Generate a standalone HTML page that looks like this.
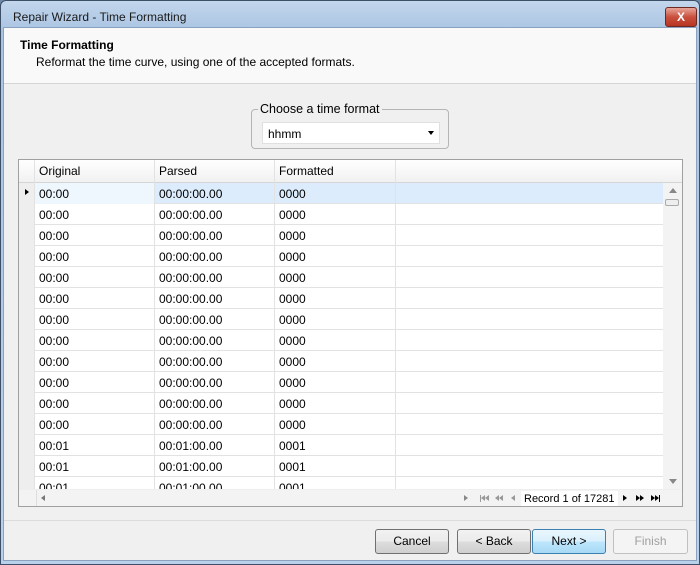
<!DOCTYPE html>
<html><head><style>
*{box-sizing:border-box;margin:0;padding:0}
body{width:700px;height:565px;overflow:hidden;font-family:"Liberation Sans",sans-serif;font-size:12px;color:#000;background:#6f8aa8}
.win{position:absolute;left:0;top:0;width:700px;height:565px;border:1px solid #3c4f66;border-radius:6px 6px 0 0;background:linear-gradient(#c2d6ec,#aac4e2 30px,#b9d1ea);}
.title{position:absolute;left:12px;top:9px;font-size:12px;color:#1a1a1a}
.close{position:absolute;left:664px;top:6px;width:32px;height:20px;border:1px solid #6d2a24;border-radius:3px;background:linear-gradient(#e8a69a,#c9503d 50%,#b63522);color:#fff;font-weight:bold;text-align:center;line-height:18px;font-size:12px}
.client{position:absolute;left:2px;top:26px;width:694px;height:534px;background:#f0f0f0;border:1px solid #8aa2bd}
.hdr{position:absolute;left:0;top:0;width:692px;height:56px;background:#f9f9f9;border-bottom:1px solid #d5d5d5}
.h1{position:absolute;left:16px;top:10px;font-weight:bold}
.h2{position:absolute;left:32px;top:27px}
fieldset{position:absolute;left:247px;top:81px;width:198px;height:40px;border:1px solid #b5b5b5;border-radius:4px}
.leg{position:absolute;left:254px;top:74px;background:#f0f0f0;padding:0 2px;font-size:12.5px}
.combo{position:absolute;left:258px;top:94px;width:178px;height:22px;background:#fff;border:1px solid #e0e0e0;padding:4px 5px}
.combo:after{content:"";position:absolute;right:5px;top:8px;border:3px solid transparent;border-top:4px solid #000}
.grid{position:absolute;left:14px;top:131px;width:665px;height:348px;border:1px solid #a0a0a0;background:#fff;overflow:hidden}
.row{position:absolute;left:0;height:21px;width:644px;border-bottom:1px solid #e2e2e2}
.row div{position:absolute;top:0;height:21px;border-right:1px solid #e2e2e2;padding:5px 4px 3px;line-height:13px}
.sel{position:absolute;left:0;width:16px;height:21px;background:#eeeeee;border-right:1px solid #d0d0d0}
.vs{position:absolute;left:644px;top:23px;width:19px;height:307px;background:#f3f3f3}
.bot{position:absolute;left:0;top:329px;width:663px;height:18px;background:#f3f3f3;border-top:1px solid #eee}
.btn{position:absolute;top:501px;height:25px;border:1px solid #707070;border-radius:3px;background:linear-gradient(#f2f2f2,#ebebeb 50%,#dddddd 51%,#cfcfcf);text-align:center;line-height:23px}
.tr{position:absolute;top:5px;border:3.5px solid transparent;border-left:4px solid #000;border-right:0}
.tl{position:absolute;top:5px;border:3.5px solid transparent;border-right:4px solid #999;border-left:0}
.bar{position:absolute;top:5px;width:1px;height:7px}
</style></head><body>
<div class="win">
<div class="title">Repair Wizard - Time Formatting</div>
<div class="close">X</div>
<div class="client">
<div class="hdr"><div class="h1">Time Formatting</div><div class="h2">Reformat the time curve, using one of the accepted formats.</div></div>
<fieldset></fieldset><div class="leg">Choose a time format</div>
<div class="combo">hhmm</div>
<div class="grid">
<div class="row" style="top:0;height:23px;background:linear-gradient(#fff,#f1f1f1);border-bottom:1px solid #d5d5d5;width:663px"><div style="left:0;width:16px;height:23px"></div><div style="left:16px;width:120px;height:23px">Original</div><div style="left:136px;width:120px;height:23px">Parsed</div><div style="left:256px;width:121px;height:23px">Formatted</div></div>
<div class="row" style="top:23px;background:#dcecfc"><div class="sel" style="padding:0"><span style="position:absolute;left:6px;top:6px;border:3.5px solid transparent;border-left:4px solid #000"></span></div><div style="left:16px;width:120px;background:#eef6fe">00:00</div><div style="left:136px;width:120px">00:00:00.00</div><div style="left:256px;width:121px">0000</div></div>
<div class="row" style="top:44px"><div class="sel"></div><div style="left:16px;width:120px">00:00</div><div style="left:136px;width:120px">00:00:00.00</div><div style="left:256px;width:121px">0000</div></div>
<div class="row" style="top:65px"><div class="sel"></div><div style="left:16px;width:120px">00:00</div><div style="left:136px;width:120px">00:00:00.00</div><div style="left:256px;width:121px">0000</div></div>
<div class="row" style="top:86px"><div class="sel"></div><div style="left:16px;width:120px">00:00</div><div style="left:136px;width:120px">00:00:00.00</div><div style="left:256px;width:121px">0000</div></div>
<div class="row" style="top:107px"><div class="sel"></div><div style="left:16px;width:120px">00:00</div><div style="left:136px;width:120px">00:00:00.00</div><div style="left:256px;width:121px">0000</div></div>
<div class="row" style="top:128px"><div class="sel"></div><div style="left:16px;width:120px">00:00</div><div style="left:136px;width:120px">00:00:00.00</div><div style="left:256px;width:121px">0000</div></div>
<div class="row" style="top:149px"><div class="sel"></div><div style="left:16px;width:120px">00:00</div><div style="left:136px;width:120px">00:00:00.00</div><div style="left:256px;width:121px">0000</div></div>
<div class="row" style="top:170px"><div class="sel"></div><div style="left:16px;width:120px">00:00</div><div style="left:136px;width:120px">00:00:00.00</div><div style="left:256px;width:121px">0000</div></div>
<div class="row" style="top:191px"><div class="sel"></div><div style="left:16px;width:120px">00:00</div><div style="left:136px;width:120px">00:00:00.00</div><div style="left:256px;width:121px">0000</div></div>
<div class="row" style="top:212px"><div class="sel"></div><div style="left:16px;width:120px">00:00</div><div style="left:136px;width:120px">00:00:00.00</div><div style="left:256px;width:121px">0000</div></div>
<div class="row" style="top:233px"><div class="sel"></div><div style="left:16px;width:120px">00:00</div><div style="left:136px;width:120px">00:00:00.00</div><div style="left:256px;width:121px">0000</div></div>
<div class="row" style="top:254px"><div class="sel"></div><div style="left:16px;width:120px">00:00</div><div style="left:136px;width:120px">00:00:00.00</div><div style="left:256px;width:121px">0000</div></div>
<div class="row" style="top:275px"><div class="sel"></div><div style="left:16px;width:120px">00:01</div><div style="left:136px;width:120px">00:01:00.00</div><div style="left:256px;width:121px">0001</div></div>
<div class="row" style="top:296px"><div class="sel"></div><div style="left:16px;width:120px">00:01</div><div style="left:136px;width:120px">00:01:00.00</div><div style="left:256px;width:121px">0001</div></div>
<div class="row" style="top:317px"><div class="sel"></div><div style="left:16px;width:120px">00:01</div><div style="left:136px;width:120px">00:01:00.00</div><div style="left:256px;width:121px">0001</div></div>
<div class="vs"><div style="position:absolute;left:6px;top:5px;border:4px solid transparent;border-bottom:5px solid #888;border-top:0"></div><div style="position:absolute;left:2px;top:16px;width:14px;height:7px;border:1px solid #aaa;border-radius:2px;background:#eee"></div><div style="position:absolute;left:6px;top:296px;border:4px solid transparent;border-top:5px solid #888;border-bottom:0"></div></div>
<div class="bot"><div style="position:absolute;left:17px;top:0;width:1px;height:18px;background:#ddd"></div><span class="tl" style="left:22px;border-right-color:#777"></span>
<span class="tr" style="left:445px;border-left-color:#888"></span>
<span class="bar" style="left:461px;background:#999"></span><span class="tl" style="left:462px"></span><span class="tl" style="left:466px"></span>
<span class="tl" style="left:476px"></span><span class="tl" style="left:480px"></span>
<span class="tl" style="left:492px"></span>
<span style="position:absolute;left:502px;top:1px;background:#fff;padding:0 3px;height:16px;line-height:16px;font-size:11px">Record 1 of 17281</span>
<span class="tr" style="left:604px"></span>
<span class="tr" style="left:617px"></span><span class="tr" style="left:621px"></span>
<span class="tr" style="left:632px"></span><span class="tr" style="left:636px"></span><span class="bar" style="left:640px;background:#000"></span>
</div>
</div>
<div style="position:absolute;left:0;top:492px;width:692px;height:1px;background:#dcdcdc"></div>
<div class="btn" style="left:371px;width:74px">Cancel</div>
<div class="btn" style="left:453px;width:74px">&lt; Back</div>
<div class="btn" style="left:528px;width:74px;border-color:#3c7fb1;background:linear-gradient(#eaf6fd,#d9f0fc 50%,#bee6fd 51%,#a7d9f5)">Next &gt;</div>
<div class="btn" style="left:609px;width:75px;border-color:#c0c0c0;background:#f4f4f4;color:#a0a0a0">Finish</div>
</div></div>
</body></html>
